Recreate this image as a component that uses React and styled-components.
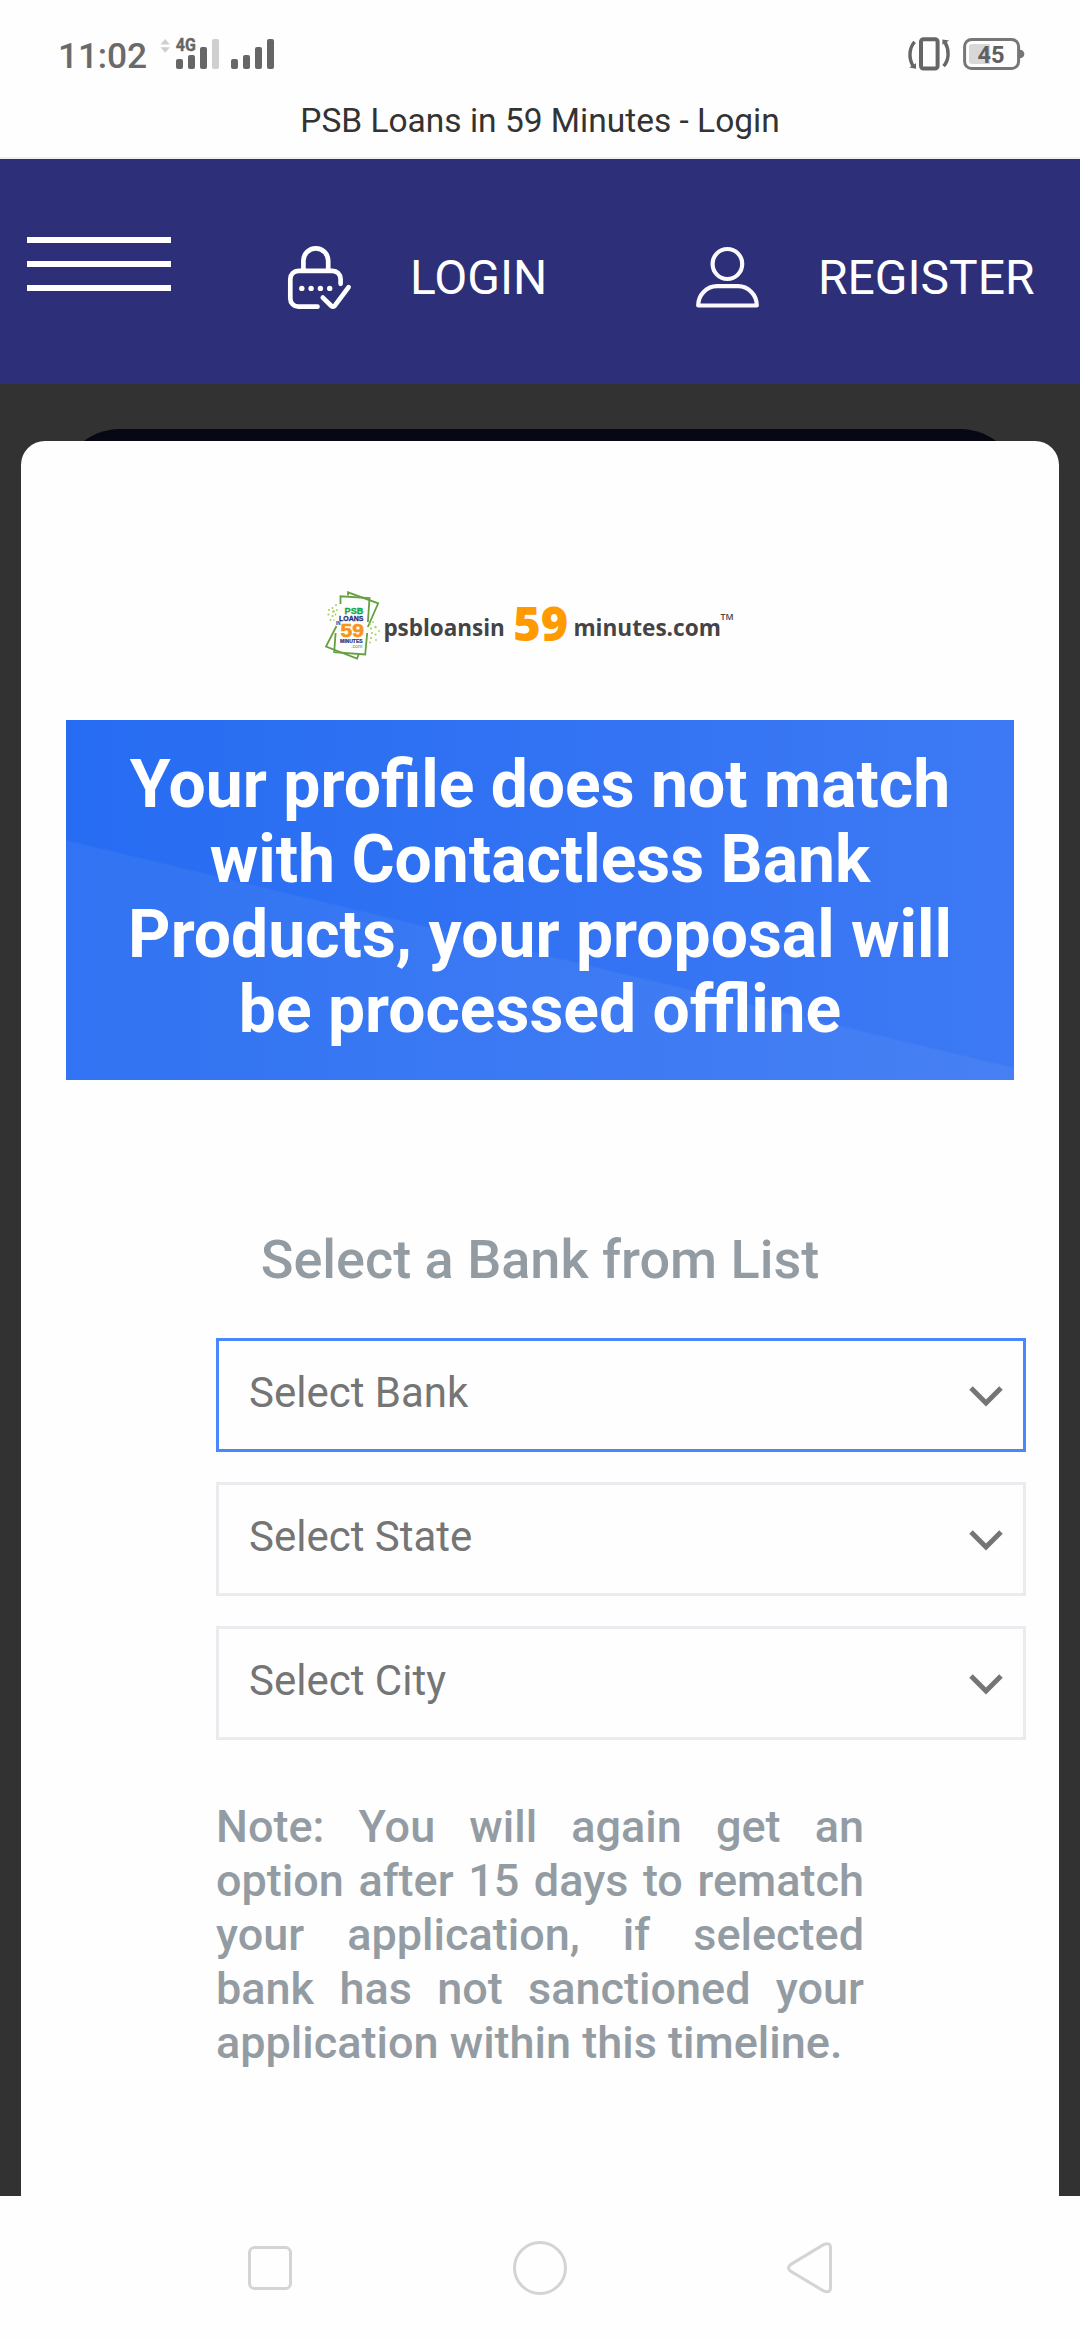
import React from "react";
import styled, { createGlobalStyle } from "styled-components";

const GlobalStyle = createGlobalStyle`
  * { box-sizing: border-box; }
  body {
    margin: 0;
    background: #fefefe;
    font-family: Roboto, "Liberation Sans", sans-serif;
  }
  svg { display: block; flex: none; overflow: visible; }
`;

const Screen = styled.div`
  width: 1080px;
  height: 2340px;
  overflow: hidden;
  display: flex;
  flex-direction: column;
  background: #fefefe;
`;

const StatusBar = styled.div`
  height: 100px;
  padding: 8px 57px 0 58px;
  display: flex;
  align-items: center;
  justify-content: space-between;
`;

const StatusGroup = styled.div`
  display: flex;
  align-items: center;
  gap: ${(p) => p.$gap}px;
`;

const Clock = styled.span`
  width: 89px;
  padding-top: 3px;
  font-size: 35.4px;
  line-height: 40px;
  font-weight: 500;
  letter-spacing: -0.2px;
  color: #6a6a6a;
  white-space: nowrap;
`;

const PageTitle = styled.div`
  height: 59px;
  padding-top: 1px;
  border-bottom: 2px solid #eeeeee;
  font-size: 33.5px;
  line-height: 40px;
  text-align: center;
  color: #333333;
`;

const Header = styled.header`
  height: 225px;
  padding: 12px 0 0 27px;
  display: flex;
  align-items: center;
  background: #2d2f78;
`;

const MenuButton = styled.div`
  display: flex;
  flex-direction: column;
  gap: 18px;
  width: 144px;
  margin: 0 117px 27px 0;
`;

const MenuBar = styled.span`
  height: 6px;
  background: #ffffff;
`;

const HeaderLink = styled.div`
  display: flex;
  align-items: center;
  gap: 59px;
  width: ${(p) => p.$width}px;
  font-size: 48px;
  line-height: 60px;
  color: #ffffff;
`;

const Backdrop = styled.main`
  height: 1812px;
  padding-top: 45px;
  overflow: hidden;
  background: #323232;
`;

const DimmedCard = styled.div`
  height: 120px;
  margin: 0 60px -108px;
  border-radius: 60px;
  background: #060814;
`;

const Modal = styled.section`
  position: relative;
  height: 1755px;
  margin: 0 21px;
  padding: 150px 45px 0;
  border-radius: 24px 24px 0 0;
  background: #fefefe;
`;

const LogoRow = styled.div`
  padding-left: 259px;
`;

const Banner = styled.h1`
  height: 360px;
  margin: 59px 0 150px;
  padding: 27px 40px 0;
  font-size: 66px;
  line-height: 75px;
  font-weight: 700;
  text-align: center;
  color: #ffffff;
  background:
    linear-gradient(193.5deg, transparent 59%, rgba(255, 255, 255, 0.05) 59.4%),
    linear-gradient(90deg, #266cf2, #3d79f4);
`;

const Heading = styled.h2`
  margin: 0 0 48px;
  font-size: 54px;
  line-height: 60px;
  font-weight: 500;
  text-align: center;
  color: #949ca3;
`;

const Fields = styled.div`
  display: flex;
  flex-direction: column;
  gap: 30px;
  width: 810px;
  margin-left: 150px;
`;

const Field = styled.div`
  display: flex;
  align-items: center;
  justify-content: space-between;
  height: 114px;
  padding: 2px 19px 0 30px;
  border: 3px solid ${(p) => (p.$active ? "#4a87fe" : "#e9ebef")};
`;

const FieldLabel = styled.span`
  padding-bottom: 7px;
  font-size: 42px;
  line-height: 50px;
  color: #757575;
`;

const Note = styled.p`
  width: 648px;
  margin: 60px 0 0 150px;
  font-size: 45px;
  line-height: 54px;
  font-weight: 500;
  text-align: justify;
  color: #949ca3;
`;

const NavBar = styled.nav`
  height: 144px;
  display: flex;
  align-items: center;
  padding-left: 248px;
`;

const NavKey = styled.div`
  width: ${(p) => p.$width}px;
`;

const SIGNAL = [
  [16, 22, 10],
  [28, 18, 14],
  [40, 10, 22],
  [52, 2, 30, "#cfcfcf"],
  [71, 22, 10],
  [83, 18, 14],
  [95, 10, 22],
  [107, 2, 30],
];

function SignalIcon() {
  return (
    <svg width="116" height="34" viewBox="0 0 116 34">
      <path d="M0.5 7.6 5.2 2l4.7 5.6zM0.5 10.2h9.4L5.2 15.8z" fill="#cfcfcf" />
      <text x="15.8" y="14.2" fontSize="17.5" fontWeight="700" fill="#666" stroke="#666" strokeWidth="0.4" textLength="20" lengthAdjust="spacingAndGlyphs">
        4G
      </text>
      {SIGNAL.map(([x, y, h, fill]) => (
        <rect key={x} x={x} y={y} width="7" height={h} rx="2" fill={fill || "#666"} />
      ))}
    </svg>
  );
}

function VibrateIcon() {
  return (
    <svg width="44" height="34" viewBox="0 0 44 34">
      <rect x="15" y="2.2" width="16.6" height="29.4" rx="2.5" fill="none" stroke="#666" strokeWidth="4" />
      <path d="M8.6 4.8C3 11 2.6 21 6.8 28.6M37.6 29.2C43.2 23 43.400 13 39.200 5.600" fill="none" stroke="#666" strokeWidth="3.4" />
      <path d="M3.200 30.4l6.800-4.200v5.600zM43.200 3.600l-6.800 4.200V2.600z" fill="#666" />
    </svg>
  );
}

function BatteryIcon() {
  return (
    <svg width="60" height="34" viewBox="0 0 60 34">
      <rect x="1.6" y="2.5" width="54" height="29" rx="7" fill="none" stroke="#777" strokeWidth="3" />
      <path d="M57 13.4a3.4 3.4 0 0 1 0 7.2z" fill="#777" stroke="#777" strokeWidth="1.5" />
      <path d="M9 7h18v20H9a3 3 0 0 1-3-3V10a3 3 0 0 1 3-3z" fill="#d8d8d8" />
      <text x="14.6" y="26" fontSize="24" fontWeight="700" fill="#606060" textLength="27" lengthAdjust="spacingAndGlyphs">
        45
      </text>
    </svg>
  );
}

function LockIcon() {
  return (
    <svg width="63" height="63" viewBox="0 0 63 63" fill="none" stroke="#fff" strokeWidth="4.7" strokeLinecap="round" strokeLinejoin="round">
      <path d="M15.4 24V14.8a12.4 12.4 0 0 1 24.8 0V24" />
      <path d="M52.6 37.8V33a8.2 8.2 0 0 0-8.2-8.2H10.5A8.2 8.2 0 0 0 2.3 33v19.5a8.2 8.2 0 0 0 8.2 8.2h19" />
      <path d="M34.8 51.6l8.6 8.4q2 1.4 3.8-.8l13.4-18" />
      <g fill="#fff" stroke="none">
        {[13.8, 23.1, 32.4, 41.7].map((x) => (
          <circle key={x} cx={x} cy="42.4" r="2.7" />
        ))}
      </g>
    </svg>
  );
}

function UserIcon() {
  return (
    <svg width="63" height="61" viewBox="0 0 63 61" fill="none" stroke="#fbf9fc" strokeWidth="4.2" strokeLinejoin="round">
      <ellipse cx="31.4" cy="17" rx="14.8" ry="15" />
      <path d="M2.2 58.5C2.2 47.5 11 39.2 21 39.2h21c10 0 18.8 8.3 18.8 19.3z" />
    </svg>
  );
}

const SPARKS = [
  [11, 14, 1], [7.5, 17, 0.9], [4, 19, 1], [8.5, 20.5, 1.3], [12, 19, 0.9],
  [3.5, 23.5, 1.1], [7.5, 25, 1.1], [10.5, 23.5, 0.9], [5.5, 29, 0.9], [9, 29, 0.8],
  [45, 33, 0.9], [48, 31, 0.9], [46, 37.5, 1.1], [50.5, 36, 1.2], [54, 40, 0.9],
  [47, 42, 1], [50.5, 43.5, 1.1], [46, 47, 1.1], [51, 49, 0.9], [45, 51.5, 0.9],
];

function Logo() {
  return (
    <svg width="410" height="70" viewBox="0 0 410 70" fontFamily='"Open Sans", "Noto Sans", sans-serif' fontWeight="700">
      <g fill="none" stroke="#67a03f" strokeWidth="1.8">
        <path d="M23 4.5V1.3l30.2 11L42.8 36M11.5 35 1 55.6l31 12 2-5" />
        <path d="M15.5 13V5.3l29 1.7-1.6 24M42.2 42l-2 21.5L9.2 61.2 10.6 42" />
      </g>
      <g fill="#a5d05a">
        {SPARKS.map(([x, y, r]) => (
          <circle key={`${x}-${y}`} cx={x} cy={y} r={r} />
        ))}
      </g>
      <g fontFamily='"Liberation Sans", sans-serif'>
        <text x="19.6" y="23" fontSize="8.6" fill="#12a548" stroke="#12a548" strokeWidth="0.3" textLength="18.8" lengthAdjust="spacingAndGlyphs">PSB</text>
        <text x="14" y="29.8" fontSize="6.8" fill="#28307c" stroke="#28307c" strokeWidth="0.3" textLength="24.4" lengthAdjust="spacingAndGlyphs">LOANS</text>
        <text x="11" y="34.4" fontSize="4.5" fill="#28307c">IN</text>
        <text x="15.6" y="45.8" fontSize="18.6" fill="#f7941d" stroke="#f7941d" strokeWidth="0.6" textLength="23.4" lengthAdjust="spacingAndGlyphs">59</text>
        <text x="15" y="51.5" fontSize="5.4" fill="#28307c" stroke="#28307c" strokeWidth="0.2" textLength="22.6" lengthAdjust="spacingAndGlyphs">MINUTES</text>
        <text x="26" y="56.6" fontSize="6.2" fontWeight="400" fill="#12a548" textLength="11.4" lengthAdjust="spacingAndGlyphs">.com</text>
      </g>
      <text x="58.4" y="45" fontSize="24" fill="#444446" textLength="121.5" lengthAdjust="spacingAndGlyphs">psbloansin</text>
      <text x="188.2" y="50" fontSize="48" fontWeight="800" fill="#ff9a00" textLength="55" lengthAdjust="spacingAndGlyphs">59</text>
      <text x="248.4" y="45" fontSize="24" fill="#444446" textLength="147.5" lengthAdjust="spacingAndGlyphs">minutes.com</text>
      <text x="395.6" y="29.2" fontSize="9" fontWeight="600" fill="#444446" textLength="13" lengthAdjust="spacingAndGlyphs">TM</text>
    </svg>
  );
}

function Chevron() {
  return (
    <svg width="36" height="24" viewBox="0 0 36 24">
      <path d="M3 4 18 19 33 4" fill="none" stroke="#757575" strokeWidth="5" />
    </svg>
  );
}

const FIELDS = ["Select Bank", "Select State", "Select City"];

export default function App() {
  return (
    <Screen>
      <GlobalStyle />
      <StatusBar>
        <StatusGroup $gap={13}>
          <Clock>11:02</Clock>
          <SignalIcon />
        </StatusGroup>
        <StatusGroup $gap={13}>
          <VibrateIcon />
          <BatteryIcon />
        </StatusGroup>
      </StatusBar>
      <PageTitle>PSB Loans in 59 Minutes - Login</PageTitle>
      <Header>
        <MenuButton>
          <MenuBar />
          <MenuBar />
          <MenuBar />
        </MenuButton>
        <HeaderLink $width={408}>
          <LockIcon />
          LOGIN
        </HeaderLink>
        <HeaderLink $width={384}>
          <UserIcon />
          REGISTER
        </HeaderLink>
      </Header>
      <Backdrop>
        <DimmedCard />
        <Modal>
          <LogoRow>
            <Logo />
          </LogoRow>
          <Banner>
            Your profile does not match with Contactless Bank Products, your proposal will be processed offline
          </Banner>
          <Heading>Select a Bank from List</Heading>
          <Fields>
            {FIELDS.map((label, i) => (
              <Field key={label} $active={i === 0}>
                <FieldLabel>{label}</FieldLabel>
                <Chevron />
              </Field>
            ))}
          </Fields>
          <Note>
            Note: You will again get an option after 15 days to rematch your application, if selected bank has not
            sanctioned your application within this timeline.
          </Note>
        </Modal>
      </Backdrop>
      <NavBar>
        <NavKey $width={265}>
          <svg width="44" height="44" viewBox="0 0 44 44">
            <rect x="1.5" y="1.5" width="41" height="41" rx="5" fill="none" stroke="#d4d4d4" strokeWidth="3" />
          </svg>
        </NavKey>
        <NavKey $width={274}>
          <svg width="54" height="54" viewBox="0 0 54 54">
            <circle cx="27" cy="27" r="25.5" fill="none" stroke="#d4d4d4" strokeWidth="3" />
          </svg>
        </NavKey>
        <NavKey $width={45}>
          <svg width="45" height="53" viewBox="0 0 45 53">
            <path
              d="M3.4 22.6 36.5 2.6Q43.5-.3 43.5 6v39.5q0 6.300-7 3.400L3.400 29.100q-3.600-3.200 0-6.500z"
              fill="none"
              stroke="#d4d4d4"
              strokeWidth="3"
            />
          </svg>
        </NavKey>
      </NavBar>
    </Screen>
  );
}
